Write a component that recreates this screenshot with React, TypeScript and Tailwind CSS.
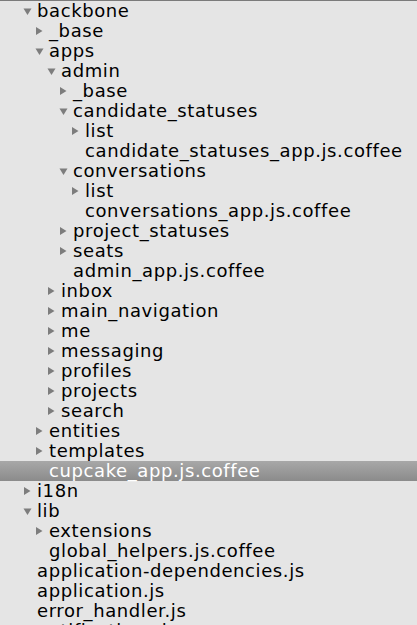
import React from 'react';

type Row = { name: string; level: number; kind: 'open' | 'closed' | 'file'; selected?: boolean };

const rows: Row[] = [
  { name: 'backbone', level: 0, kind: 'open' },
  { name: '_base', level: 1, kind: 'closed' },
  { name: 'apps', level: 1, kind: 'open' },
  { name: 'admin', level: 2, kind: 'open' },
  { name: '_base', level: 3, kind: 'closed' },
  { name: 'candidate_statuses', level: 3, kind: 'open' },
  { name: 'list', level: 4, kind: 'closed' },
  { name: 'candidate_statuses_app.js.coffee', level: 4, kind: 'file' },
  { name: 'conversations', level: 3, kind: 'open' },
  { name: 'list', level: 4, kind: 'closed' },
  { name: 'conversations_app.js.coffee', level: 4, kind: 'file' },
  { name: 'project_statuses', level: 3, kind: 'closed' },
  { name: 'seats', level: 3, kind: 'closed' },
  { name: 'admin_app.js.coffee', level: 3, kind: 'file' },
  { name: 'inbox', level: 2, kind: 'closed' },
  { name: 'main_navigation', level: 2, kind: 'closed' },
  { name: 'me', level: 2, kind: 'closed' },
  { name: 'messaging', level: 2, kind: 'closed' },
  { name: 'profiles', level: 2, kind: 'closed' },
  { name: 'projects', level: 2, kind: 'closed' },
  { name: 'search', level: 2, kind: 'closed' },
  { name: 'entities', level: 1, kind: 'closed' },
  { name: 'templates', level: 1, kind: 'closed' },
  { name: 'cupcake_app.js.coffee', level: 1, kind: 'file', selected: true },
  { name: 'i18n', level: 0, kind: 'closed' },
  { name: 'lib', level: 0, kind: 'open' },
  { name: 'extensions', level: 1, kind: 'closed' },
  { name: 'global_helpers.js.coffee', level: 1, kind: 'file' },
  { name: 'application-dependencies.js', level: 0, kind: 'file' },
  { name: 'application.js', level: 0, kind: 'file' },
  { name: 'error_handler.js', level: 0, kind: 'file' },
  { name: 'notifications.js', level: 0, kind: 'file' },
];

const indents = ['pl-[23px]', 'pl-[35px]', 'pl-[47px]', 'pl-[59px]', 'pl-[71px]'];

function Arrow({ kind }: { kind: Row['kind'] }) {
  if (kind === 'open')
    return (
      <svg width="14" height="20" viewBox="0 0 14 20" className="shrink-0">
        <polygon points="0.5,7.5 8.5,7.5 4.5,14" fill="#7d7d7d" />
      </svg>
    );
  if (kind === 'closed')
    return (
      <svg width="14" height="20" viewBox="0 0 14 20" className="shrink-0">
        <polygon points="1,6 7.5,10 1,14" fill="#7d7d7d" />
      </svg>
    );
  return <span className="w-[14px] shrink-0" />;
}

function TreeRow({ row }: { row: Row }) {
  return (
    <div
      className={`flex h-5 items-center whitespace-nowrap ${indents[row.level]} ${
        row.selected ? 'bg-gradient-to-b from-[#a8a8a8] to-[#8b8b8b] text-white' : 'text-black'
      }`}
    >
      <Arrow kind={row.kind} />
      <span className="leading-5 tracking-[0.6px]">{row.name}</span>
    </div>
  );
}

export default function App() {
  return (
    <div
      className="h-[625px] w-[417px] overflow-hidden border-t border-[#7b7b7b] bg-[#e5e5e5] text-[18px]"
      style={{ fontFamily: '"DejaVu Sans", sans-serif' }}
    >
      {rows.map((r, i) => (
        <TreeRow key={i} row={r} />
      ))}
    </div>
  );
}
